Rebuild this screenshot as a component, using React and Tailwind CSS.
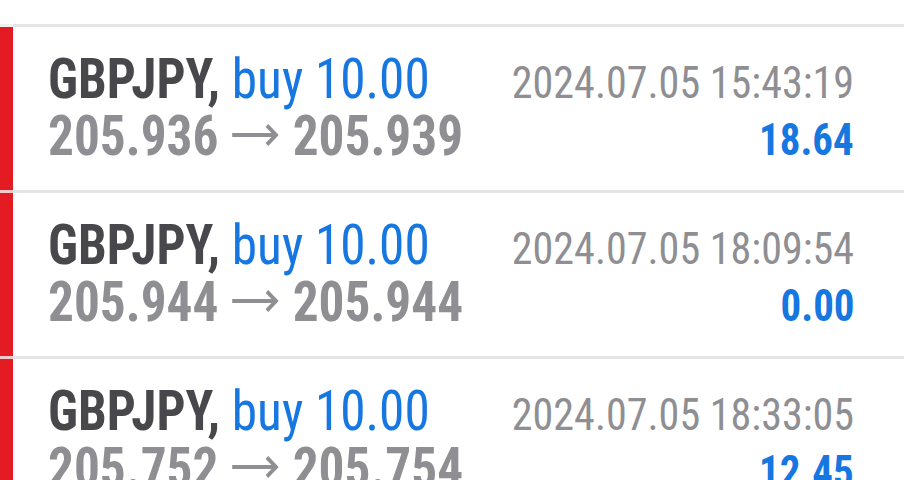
const TRADES = [
  { symbol: 'GBPJPY', side: 'buy', volume: '10.00', open: '205.936', close: '205.939', time: '2024.07.05 15:43:19', profit: '18.64' },
  { symbol: 'GBPJPY', side: 'buy', volume: '10.00', open: '205.944', close: '205.944', time: '2024.07.05 18:09:54', profit: '0.00' },
  { symbol: 'GBPJPY', side: 'buy', volume: '10.00', open: '205.752', close: '205.754', time: '2024.07.05 18:33:05', profit: '12.45' },
];

function Divider({ tint }) {
  return (
    <div className="flex h-[3px]">
      <div className={tint ? 'w-[13px] bg-[#f3c9ca]' : 'w-[13px] bg-[#f2f2f2]'} />
      <div className="flex-1 bg-[#e5e5e5]" />
    </div>
  );
}

function Arrow() {
  return (
    <svg viewBox="0 0 51 24" className="mx-[15px] inline-block h-[24px] w-[51px] align-[8px]" fill="none" stroke="#8e8e93" strokeWidth="4" strokeLinecap="butt" strokeLinejoin="miter">
      <path d="M0 12H48" />
      <path d="M38 2.5L48 12L38 21.5" />
    </svg>
  );
}

function TradeRow({ trade }) {
  return (
    <div className="flex h-[163px]">
      <div className="w-[13px] shrink-0 bg-[#e31c23]" />
      <div className="flex flex-1 flex-col pl-[35px] pr-[50px] pt-[24px] leading-[57px]">
        <div className="flex h-[57px] items-baseline justify-between whitespace-nowrap">
          <span className="inline-block origin-left scale-x-[0.915] text-[56px]">
            <span className="font-bold text-[#48484c]">{trade.symbol},</span>{' '}
            <span className="text-[#1677e1]">{trade.side} {trade.volume}</span>
          </span>
          <span className="inline-block origin-right scale-x-[0.935] text-[45px] text-[#8e8e93]">{trade.time}</span>
        </div>
        <div className="flex h-[57px] items-baseline justify-between whitespace-nowrap">
          <span className="inline-block origin-left scale-x-[0.916] text-[56px] font-bold text-[#8e8e93]">
            {trade.open}
            <Arrow />
            {trade.close}
          </span>
          <span className="inline-block origin-right scale-x-[0.93] text-[44px] font-bold text-[#1677e1]">{trade.profit}</span>
        </div>
      </div>
    </div>
  );
}

export default function App() {
  return (
    <div className="h-[480px] w-[904px] overflow-hidden bg-white font-['Roboto_Condensed','Roboto',sans-serif]">
      <div className="h-[24px]" />
      <Divider />
      {TRADES.map((trade) => (
        <div key={trade.time}>
          <TradeRow trade={trade} />
          <Divider tint />
        </div>
      ))}
    </div>
  );
}
